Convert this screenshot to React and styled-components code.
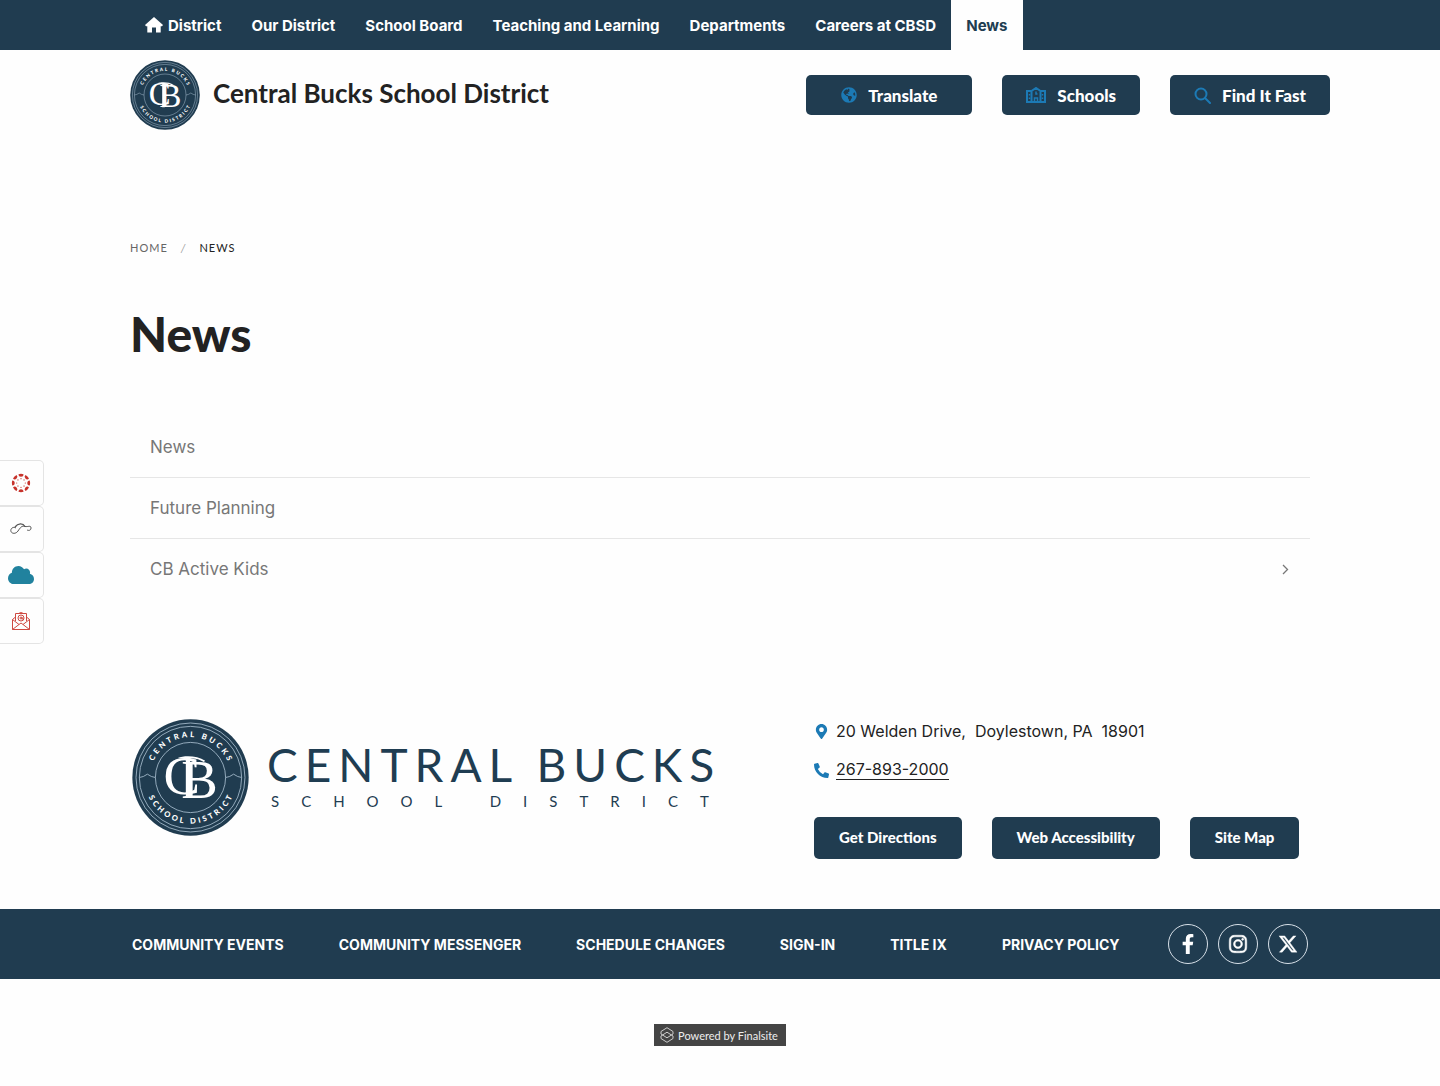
import React from "react";
import styled, { createGlobalStyle } from "styled-components";
import {
  FaCloud,
  FaFacebookF,
  FaGlobeAmericas,
  FaInstagram,
  FaMapMarkerAlt,
  FaPhoneAlt,
} from "react-icons/fa";
import { FaXTwitter } from "react-icons/fa6";

const navLinks = [
  "Our District",
  "School Board",
  "Teaching and Learning",
  "Departments",
  "Careers at CBSD",
];

const pages = [
  { name: "News" },
  { name: "Future Planning" },
  { name: "CB Active Kids", hasChildren: true },
];

const footerLinks = [
  "Community Events",
  "Community Messenger",
  "Schedule Changes",
  "Sign-In",
  "Title IX",
  "Privacy Policy",
];

const Seal = ({ id, size }) => (
  <svg
    width={size}
    height={size}
    viewBox="-175 -175 350 350"
    role="img"
    aria-label="Central Bucks School District seal"
  >
    <defs>
      <path id={`${id}-top`} d="M-121 0A121 121 0 0 1 121 0" />
      <path id={`${id}-bottom`} d="M-138 0A138 138 0 0 0 138 0" />
    </defs>
    <circle r="174" fill="#203c50" />
    <g fill="none" stroke="#a9bfd0" strokeWidth="2.5">
      <circle r="163" />
      <circle r="153" />
      <circle r="105" />
      <path d="M-153 0l12-3l12-7l12 7l12 3M153 0l-12-3l-12-7l-12 7l-12 3" />
    </g>
    <g
      fill="#fff"
      fontFamily='Lato, "Liberation Sans", sans-serif'
      fontWeight="900"
      fontSize="23"
      textAnchor="middle"
      letterSpacing="8"
    >
      <text>
        <textPath href={`#${id}-top`} startOffset="51%">
          CENTRAL BUCKS
        </textPath>
      </text>
      <text>
        <textPath href={`#${id}-bottom`} startOffset="51%">
          SCHOOL DISTRICT
        </textPath>
      </text>
    </g>
    <g fill="#fff" fontFamily='"Liberation Serif", serif'>
      <text x="-81" y="50" fontSize="164">
        C
      </text>
      <text x="-28" y="61" fontSize="164">
        B
      </text>
    </g>
    <path
      d="M-38 -58C-20 -66 20 -66 44 -50L40 -46C24 -56 10 -58 -1 -56V61H-14V-56C-22 -58 -30 -58 -38 -58Z"
      fill="#fff"
    />
  </svg>
);

const Wordmark = () => (
  <svg width="470" height="90" viewBox="0 -10 470 90">
    <g fill="#1f3d52" fontFamily='Lato, "Liberation Sans", sans-serif'>
      <text x="0" y="39" fontSize="46" letterSpacing="7">
        CENTRAL BUCKS
      </text>
      <text x="4" y="64" fontSize="15" letterSpacing="22">
        SCHOOL DISTRICT
      </text>
    </g>
  </svg>
);

const HomeIcon = () => (
  <svg width="18" height="16" viewBox="0 0 18 16" fill="currentColor">
    <path d="M9 0L18 8L17 9.200H15.700V15.500H11V10.500H7V15.500H2.300V9.200H1L0 8Z" />
  </svg>
);

const SchoolIcon = () => (
  <svg width="20" height="16" viewBox="0 0 20 16" fill="none" stroke="currentColor" strokeWidth="2">
    <path d="M5 4H1V15H19V4H15M5.500 15V4L10 1L14.500 4V15" />
    <path d="M3.500 7v1.500M3.500 10.500V12M16.500 7v1.500M16.500 10.500V12" strokeWidth="1.500" />
    <path d="M8.500 15v-4h3v4M10 4.500v2.500h1.500" strokeWidth="1.500" />
  </svg>
);

const SearchIcon = () => (
  <svg width="17" height="17" viewBox="0 0 17 17" fill="none" stroke="currentColor" strokeWidth="2">
    <circle cx="7" cy="7" r="5.500" />
    <path d="M11 11l5 5" strokeLinecap="round" />
  </svg>
);

const ChevronIcon = () => (
  <svg width="8" height="12" viewBox="0 0 8 12" fill="none" stroke="#777" strokeWidth="1.300">
    <path d="M2 2l4.500 4.500L2 11" />
  </svg>
);

const CanvasIcon = () => (
  <svg width="20" height="20" viewBox="-10 -10 20 20" fill="#c7322b">
    {[0, 45, 90, 135, 180, 225, 270, 315].map((angle) => (
      <g key={angle} transform={`rotate(${angle})`}>
        <path d="M-2.500 -8.800A9.200 9.200 0 0 1 2.500 -8.800A2.500 2.500 0 0 1 -2.500 -8.800Z" />
        <circle cy="-4.300" r="0.600" />
      </g>
    ))}
  </svg>
);

const SwirlIcon = () => (
  <svg width="22" height="12" viewBox="0 0 22 12" fill="none" stroke="#555">
    <path d="M6 5C3 3 0 6 1 8.500C2 11 6 11 8 8C10 5 12 2 15 3.500C18 4 21 2 21 5C21 8 18 7.500 17 7" />
    <path d="M5 4C8 0 13 0 15 3.500" strokeWidth="1.300" />
  </svg>
);

const MailIcon = () => (
  <svg width="18" height="18" viewBox="0 0 18 18" fill="none" stroke="#cf4a42">
    <path d="M3.500 9V1.500h11V9M3.500 5L.500 7.500v10h17v-10L14.500 5M.500 7.500L7 12.500M17.500 7.500L11 12.500M.500 17.500L7 12.500L9 11L11 12.500L17.500 17.500M6.500 1.500L9 .500L11.500 1.500" />
    <circle cx="9" cy="6" r="3" />
    <circle cx="9" cy="6" r="1" />
    <path d="M10 5v2h1.500" />
  </svg>
);

const FinalsiteIcon = () => (
  <svg width="14" height="16" viewBox="0 0 14 16" fill="none" stroke="#ccc">
    <path d="M7 .700L13 4.500V7L7 10.800L1 7V4.500ZM7 5.200L13 9V11.500L7 15.300L1 11.500V9Z" />
  </svg>
);

const App = () => {
  return (
    <>
      <GlobalStyle />
      <TopBar>
        <TopNav aria-label="District">
          <TopLink href="#district">
            <HomeIcon />
            District
          </TopLink>
          {navLinks.map((name) => (
            <TopLink href="#section" key={name}>
              {name}
            </TopLink>
          ))}
          <TopLink href="#news" $active aria-current="page">
            News
          </TopLink>
        </TopNav>
      </TopBar>

      <Header>
        <Brand href="#home">
          <Seal id="header-seal" size={70} />
          <BrandName>Central Bucks School District</BrandName>
        </Brand>
        <HeaderActions>
          <HeaderButton type="button" $wide>
            <FaGlobeAmericas size={16} />
            <span>Translate</span>
          </HeaderButton>
          <HeaderButton type="button">
            <SchoolIcon />
            <span>Schools</span>
          </HeaderButton>
          <HeaderButton type="button">
            <SearchIcon />
            <span>Find It Fast</span>
          </HeaderButton>
        </HeaderActions>
      </Header>

      <Main>
        <Breadcrumb aria-label="Breadcrumb">
          <a href="#home">HOME</a>
          <i>/</i>
          <span>NEWS</span>
        </Breadcrumb>
        <Title>News</Title>
        <PageList>
          {pages.map((page) => (
            <li key={page.name}>
              <a href="#page">
                {page.name}
                {page.hasChildren && <ChevronIcon />}
              </a>
            </li>
          ))}
        </PageList>
      </Main>

      <QuickLinks aria-label="Quick links">
        <a href="#canvas" aria-label="Canvas">
          <CanvasIcon />
        </a>
        <a href="#portal" aria-label="Portal">
          <SwirlIcon />
        </a>
        <a href="#cloud" aria-label="Cloud">
          <FaCloud size={26} color="#21829e" />
        </a>
        <a href="#mail" aria-label="Mail">
          <MailIcon />
        </a>
      </QuickLinks>

      <footer>
        <FooterInfo>
          <FooterLogo>
            <Seal id="footer-seal" size={117} />
            <Wordmark />
          </FooterLogo>
          <Contact>
            <ContactLine>
              <FaMapMarkerAlt size={15} />
              <span>20 Welden Drive,&nbsp; Doylestown, PA&nbsp; 18901</span>
            </ContactLine>
            <ContactLine>
              <FaPhoneAlt size={15} />
              <a href="tel:267-893-2000">267-893-2000</a>
            </ContactLine>
            <FooterButtons>
              <FooterButton href="#directions">Get Directions</FooterButton>
              <FooterButton href="#accessibility">Web Accessibility</FooterButton>
              <FooterButton href="#sitemap">Site Map</FooterButton>
            </FooterButtons>
          </Contact>
        </FooterInfo>
        <FooterBar>
          <FooterBarInner>
            <FooterNav aria-label="Footer">
              {footerLinks.map((name) => (
                <a href="#footer" key={name}>
                  {name.toUpperCase()}
                </a>
              ))}
            </FooterNav>
            <Social>
              <a href="#facebook" aria-label="Facebook">
                <FaFacebookF size={20} />
              </a>
              <a href="#instagram" aria-label="Instagram">
                <FaInstagram size={20} stroke="#fff" strokeWidth={14} />
              </a>
              <a href="#x" aria-label="X">
                <FaXTwitter size={20} stroke="#fff" strokeWidth={10} />
              </a>
            </Social>
          </FooterBarInner>
        </FooterBar>
        <PoweredRow>
          <Powered href="#finalsite">
            <FinalsiteIcon />
            Powered by Finalsite
          </Powered>
        </PoweredRow>
      </footer>
    </>
  );
};

const GlobalStyle = createGlobalStyle`
  * {
    box-sizing: border-box;
  }
  body {
    margin: 0;
    background: #fefefe;
    color: #222;
    font-family: Inter, "Liberation Sans", sans-serif;
    font-size: 16px;
  }
  a {
    color: inherit;
    text-decoration: none;
  }
  svg {
    flex-shrink: 0;
  }
`;

const TopBar = styled.div`
  background: #203c50;
`;

const TopNav = styled.nav`
  display: flex;
  flex-wrap: wrap;
  max-width: 1180px;
  margin: 0 auto;
`;

const TopLink = styled.a`
  display: flex;
  align-items: center;
  gap: 5px;
  height: 50px;
  padding: 0 15px;
  font-size: 15px;
  font-weight: 700;
  color: ${(props) => (props.$active ? "#203c50" : "#fff")};
  background: ${(props) => (props.$active ? "#fefefe" : "transparent")};
`;

const Header = styled.header`
  display: flex;
  flex-wrap: wrap;
  align-items: center;
  justify-content: space-between;
  gap: 20px;
  max-width: 1220px;
  margin: 0 auto;
  padding: 10px 0 10px 20px;
`;

const Brand = styled.a`
  display: flex;
  align-items: center;
  gap: 13px;
`;

const BrandName = styled.span`
  font-family: Lato, "Liberation Sans", sans-serif;
  font-size: 26px;
  line-height: 30px;
  font-weight: 700;
  padding-bottom: 4px;
`;

const HeaderActions = styled.div`
  display: flex;
  flex-wrap: wrap;
  gap: 30px;
`;

const HeaderButton = styled.button`
  display: flex;
  align-items: center;
  gap: 11px;
  height: 40px;
  padding: 0 ${(props) => (props.$wide ? 35 : 24)}px;
  border: 0;
  border-radius: 5px;
  background: #203c50;
  color: #fff;
  font-family: Lato, "Liberation Sans", sans-serif;
  font-size: 17px;
  font-weight: 900;
  cursor: pointer;
  svg {
    color: #1c7ab5;
  }
`;

const Main = styled.main`
  max-width: 1180px;
  margin: 0 auto;
  padding: 98px 0 120px;
`;

const Breadcrumb = styled.nav`
  display: flex;
  gap: 13px;
  font-family: Lato, "Liberation Sans", sans-serif;
  font-size: 11px;
  line-height: 20px;
  letter-spacing: 1px;
  color: #666;
  i {
    color: #999;
  }
  span {
    color: #222;
  }
`;

const Title = styled.h1`
  margin: 46px 0 53px;
  font-family: Lato, "Liberation Sans", sans-serif;
  font-size: 48px;
  line-height: 60px;
  font-weight: 900;
`;

const PageList = styled.ul`
  margin: 0;
  padding: 0;
  list-style: none;
  li + li {
    border-top: 1px solid #e6e6e6;
  }
  a {
    display: flex;
    align-items: center;
    justify-content: space-between;
    height: 60px;
    padding: 0 21px 0 20px;
    font-size: 17px;
    color: #777;
  }
`;

const QuickLinks = styled.nav`
  position: fixed;
  top: 460px;
  left: 0;
  a {
    display: flex;
    align-items: center;
    justify-content: center;
    width: 44px;
    height: 46px;
    padding-right: 2px;
    border: 1px solid #e4e4e4;
    border-left: 0;
    border-radius: 0 5px 5px 0;
    background: #fefefe;
  }
`;

const FooterInfo = styled.div`
  display: flex;
  flex-wrap: wrap;
  justify-content: space-between;
  gap: 30px;
  max-width: 1180px;
  margin: 0 auto;
  padding: 0 0 50px 2px;
`;

const FooterLogo = styled.div`
  display: flex;
  align-items: center;
  align-self: flex-start;
  gap: 18px;
`;

const Contact = styled.div`
  flex: 0 0 496px;
`;

const ContactLine = styled.p`
  display: flex;
  align-items: center;
  gap: 7px;
  min-height: 24px;
  margin: 0 0 15px;
  svg {
    width: 15px;
    color: #1c7ab5;
  }
  a {
    line-height: 19px;
    border-bottom: 1px solid #222;
  }
`;

const FooterButtons = styled.div`
  display: flex;
  flex-wrap: wrap;
  gap: 30px;
  margin-top: 35px;
`;

const FooterButton = styled.a`
  height: 42px;
  padding: 0 25px;
  border-radius: 5px;
  background: #203c50;
  color: #fff;
  font-family: Lato, "Liberation Sans", sans-serif;
  font-size: 15px;
  line-height: 40px;
  font-weight: 900;
`;

const FooterBar = styled.div`
  background: #203c50;
`;

const FooterBarInner = styled.div`
  display: flex;
  flex-wrap: wrap;
  align-items: center;
  justify-content: space-between;
  max-width: 1180px;
  min-height: 70px;
  margin: 0 auto;
  padding: 0 2px;
  color: #fff;
`;

const FooterNav = styled.nav`
  display: flex;
  flex-wrap: wrap;
  gap: 10px 55px;
  font-size: 14px;
  font-weight: 700;
`;

const Social = styled.div`
  display: flex;
  gap: 10px;
  a {
    display: flex;
    align-items: center;
    justify-content: center;
    width: 40px;
    height: 40px;
    border: 1px solid #d7e0e8;
    border-radius: 50%;
  }
`;

const PoweredRow = styled.div`
  display: flex;
  justify-content: center;
  padding: 45px 0 40px;
`;

const Powered = styled.a`
  display: flex;
  align-items: center;
  gap: 4px;
  height: 22px;
  padding: 0 8px 0 6px;
  background: #444;
  color: #eee;
  font-family: Lato, "Liberation Sans", sans-serif;
  font-size: 11px;
`;

export default App;
